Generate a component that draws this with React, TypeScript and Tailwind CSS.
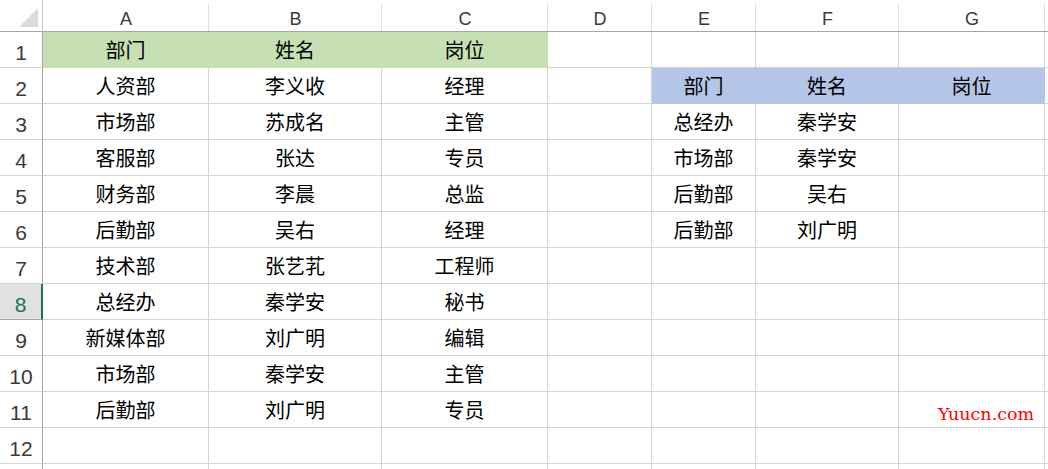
import React from "react";

const colW = [43, 166, 173, 166, 104, 104, 143, 146, 3];
const letters = ["A", "B", "C", "D", "E", "F", "G"];

type Cell = { t?: string; fill?: "green" | "blue" };

const A = ["部门", "人资部", "市场部", "客服部", "财务部", "后勤部", "技术部", "总经办", "新媒体部", "市场部", "后勤部"];
const B = ["姓名", "李义收", "苏成名", "张达", "李晨", "吴右", "张艺芤", "秦学安", "刘广明", "秦学安", "刘广明"];
const C = ["岗位", "经理", "主管", "专员", "总监", "经理", "工程师", "秘书", "编辑", "主管", "专员"];
const E = ["", "部门", "总经办", "市场部", "后勤部", "后勤部"];
const F = ["", "姓名", "秦学安", "秦学安", "吴右", "刘广明"];
const G = ["", "岗位"];

function rowCells(r: number): Cell[] {
  const i = r - 1;
  const cells: Cell[] = [];
  cells.push({ t: A[i], fill: r === 1 ? "green" : undefined });
  cells.push({ t: B[i], fill: r === 1 ? "green" : undefined });
  cells.push({ t: C[i], fill: r === 1 ? "green" : undefined });
  cells.push({});
  cells.push({ t: E[i], fill: r === 2 ? "blue" : undefined });
  cells.push({ t: F[i], fill: r === 2 ? "blue" : undefined });
  cells.push({ t: G[i], fill: r === 2 ? "blue" : undefined });
  cells.push({});
  return cells;
}

const cjk = { fontFamily: '"Noto Sans CJK SC", "Noto Sans", sans-serif' };
const lat = { fontFamily: '"Liberation Sans", Arial, sans-serif' };

export default function App() {
  const rows = Array.from({ length: 13 }, (_, k) => k + 1);
  return (
    <div className="relative w-[1048px] h-[469px] overflow-hidden bg-white">
      <div className="grid grid-cols-[43px_166px_173px_166px_104px_104px_143px_146px_3px]">
        <div className="h-[32px] border-r border-b border-r-[#c8c8c8] border-b-[#a6a6a6] flex items-end justify-end pr-[3px] pb-[3px]">
          <svg width="20" height="20" viewBox="0 0 20 20">
            <polygon points="19,0 19,19 0,19" fill="#dcdcdc" />
          </svg>
        </div>
        {letters.map((l) => (
          <div key={l} className="h-[32px] border-b border-b-[#a6a6a6] relative flex items-center justify-center pt-[7px] text-[18px] text-[#3a3a3a]" style={lat}>
            <span className="absolute right-0 top-[4px] bottom-0 w-px bg-[#e1e1e1]" />
            {l}
          </div>
        ))}
        <div className="h-[32px] border-b border-b-[#a6a6a6]" />

        {rows.map((r) => {
          const sel = r === 8;
          return (
            <React.Fragment key={r}>
              <div
                className={
                  sel
                    ? "h-[36px] border-r-2 border-r-[#217346] border-b border-b-[#a6a6a6] bg-[#e1e1e1] flex items-center justify-center pt-[6px] text-[21px] text-[#217346]"
                    : "h-[36px] border-r border-r-[#a6a6a6] border-b border-b-[#d4d4d4] flex items-center justify-center pt-[6px] text-[21px] text-[#3a3a3a]"
                }
                style={lat}
              >
                {r <= 12 ? r : ""}
              </div>
              {r <= 12
                ? rowCells(r).map((c, ci) => (
                    <div
                      key={ci}
                      className={
                        c.fill === "green"
                          ? "h-[36px] border-r border-b border-[#c6e0b4] bg-[#c6e0b4] flex items-center justify-center text-[20px] text-black"
                          : c.fill === "blue"
                          ? "h-[36px] border-r border-b border-[#b4c6e7] bg-[#b4c6e7] flex items-center justify-center text-[20px] text-black"
                          : ci === 7
                          ? "h-[36px] border-b border-b-[#d4d4d4]"
                          : "h-[36px] border-r border-b border-[#d4d4d4] flex items-center justify-center text-[20px] text-black"
                      }
                      style={cjk}
                    >
                      {c.t}
                    </div>
                  ))
                : colW.slice(1).map((_, ci) => (
                    <div key={ci} className={ci === 7 ? "h-[36px] border-b border-b-[#d4d4d4]" : "h-[36px] border-r border-b border-[#d4d4d4]"} />
                  ))}
            </React.Fragment>
          );
        })}
      </div>
      <div
        className="absolute left-[938px] top-[406px] text-[17.5px] leading-none text-[#ff0000]"
        style={{ fontFamily: '"DejaVu Serif", serif' }}
      >
        Yuucn.com
      </div>
    </div>
  );
}
